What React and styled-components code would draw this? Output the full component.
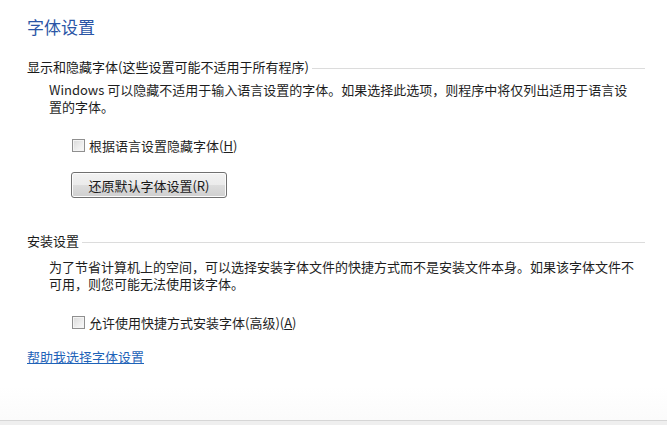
import styled, { createGlobalStyle } from "styled-components";

const GlobalStyle = createGlobalStyle`
  html, body {
    margin: 0;
    padding: 0;
    background: #fff;
  }
  body {
    font-family: "Noto Sans CJK SC", "Liberation Sans", sans-serif;
    font-size: 13px;
    color: #1e1e1e;
  }
`;

const Page = styled.div`
  width: 667px;
  height: 425px;
  display: flex;
  flex-direction: column;
  overflow: hidden;
`;

const Content = styled.div`
  flex: 1;
  padding: 15px 22px 0 27px;
  background: linear-gradient(to bottom, #fff 0, #fff 92%, #fbfbfb 100%);
`;

const Title = styled.h1`
  margin: 0;
  font-size: 17px;
  font-weight: normal;
  line-height: 24px;
  color: #2a55a6;
`;

const Section = styled.div`
  margin-top: ${({ $top }) => $top}px;
`;

const SectionHead = styled.div`
  display: flex;
  align-items: center;
  line-height: 17px;
  color: #1a1a1a;

  &::after {
    content: "";
    flex: 1;
    height: 1px;
    margin: 3px 0 0 3px;
    background: #dcdcdc;
  }
`;

const Para = styled.p`
  margin: ${({ $top }) => $top}px 0 0 22px;
  line-height: 17px;
  white-space: nowrap;
`;

const CheckRow = styled.label`
  display: flex;
  align-items: center;
  gap: 4px;
  margin: ${({ $top }) => $top}px 0 0 45px;
  line-height: 17px;
`;

const Box = styled.span`
  width: 11px;
  height: 11px;
  border: 1px solid #8f8f8f;
  background: linear-gradient(135deg, #d9d9d9 0%, #eeeeee 60%, #fafafa 100%);
  box-shadow: inset 0 0 0 1px #f4f4f4;
`;

const Key = styled.u`
  text-decoration: underline;
`;

const Button = styled.button`
  display: block;
  margin: ${({ $top }) => $top}px 0 0 44px;
  width: 156px;
  height: 26px;
  padding: 0;
  font: inherit;
  color: #1a1a1a;
  border: 1px solid #707070;
  border-radius: 3px;
  background: linear-gradient(
    to bottom,
    #f2f2f2 0%,
    #ebebeb 50%,
    #dddddd 51%,
    #cfcfcf 100%
  );
  box-shadow: inset 0 0 0 1px #fcfcfc;
`;

const HelpLink = styled.a`
  display: inline-block;
  margin-top: ${({ $top }) => $top}px;
  line-height: 17px;
  color: #1f63b8;
  text-decoration: underline;
`;

const Footer = styled.div`
  height: 4px;
  border-top: 1px solid #d6d6d6;
  background: #efefef;
`;

export default function App() {
  return (
    <>
      <GlobalStyle />
      <Page>
        <Content>
          <Title>字体设置</Title>

          <Section $top={19}>
            <SectionHead>显示和隐藏字体(这些设置可能不适用于所有程序)</SectionHead>
            <Para $top={6}>
              Windows 可以隐藏不适用于输入语言设置的字体。如果选择此选项，则程序中将仅列出适用于语言设
              <br />
              置的字体。
            </Para>
            <CheckRow $top={22}>
              <Box />
              <span>
                根据语言设置隐藏字体(<Key>H</Key>)
              </span>
            </CheckRow>
            <Button $top={18}>还原默认字体设置(R)</Button>
          </Section>

          <Section $top={34}>
            <SectionHead>安装设置</SectionHead>
            <Para $top={9}>
              为了节省计算机上的空间，可以选择安装字体文件的快捷方式而不是安装文件本身。如果该字体文件不
              <br />
              可用，则您可能无法使用该字体。
            </Para>
            <CheckRow $top={22}>
              <Box />
              <span>
                允许使用快捷方式安装字体(高级)(<Key>A</Key>)
              </span>
            </CheckRow>
          </Section>

          <HelpLink href="#" $top={17}>
            帮助我选择字体设置
          </HelpLink>
        </Content>
        <Footer />
      </Page>
    </>
  );
}
